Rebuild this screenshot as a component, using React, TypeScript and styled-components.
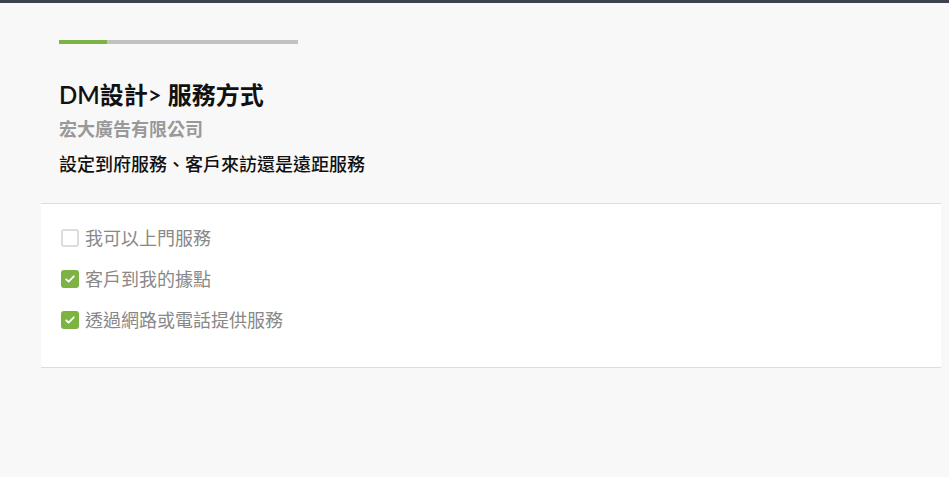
import React from 'react'
import styled, { createGlobalStyle } from 'styled-components'

const GlobalStyle = createGlobalStyle`
  html, body {
    margin: 0;
    padding: 0;
    background: #f8f8f8;
  }
  body {
    font-family: Lato, "Noto Sans CJK TC", sans-serif;
    color: #222;
  }
`

const Page = styled.div`
  min-height: 477px;
  border-top: 3px solid #3d434c;
  box-sizing: border-box;
  padding-top: 37px;
`

const Header = styled.div`
  padding: 0 59px;
`

const Progress = styled.div<{ $percent: number }>`
  width: 239px;
  height: 4px;
  background: #c2c2c2;

  &::before {
    content: '';
    display: block;
    height: 100%;
    width: ${({ $percent }) => $percent}%;
    background: #7cb342;
  }
`

const Title = styled.h1`
  margin: 36px 0 0;
  font-size: 24px;
  font-weight: 600;
  line-height: 30px;
  color: #111;
`

const Company = styled.div`
  margin-top: 7px;
  font-size: 18px;
  font-weight: 700;
  line-height: 24px;
  color: #999;
`

const Description = styled.p`
  margin: 11px 0 0;
  font-size: 18px;
  font-weight: 500;
  line-height: 24px;
  color: #111;
`

const Card = styled.div`
  margin: 27px 8px 0 41px;
  background: #fff;
  border-top: 1px solid #ddd;
  border-bottom: 1px solid #ddd;
  padding: 24px 20px 37px;
  display: flex;
  flex-direction: column;
  gap: 21px;
`

const Option = styled.label`
  display: flex;
  align-items: center;
  gap: 6px;
  font-size: 18px;
  line-height: 20px;
  color: #888;
  cursor: pointer;
`

const Box = styled.span<{ $checked: boolean }>`
  flex: none;
  width: 18px;
  height: 18px;
  box-sizing: border-box;
  border-radius: 3px;
  display: inline-flex;
  align-items: center;
  justify-content: center;
  background: ${({ $checked }) => ($checked ? '#7cb342' : '#fff')};
  border: ${({ $checked }) => ($checked ? 'none' : '2px solid #ddd')};
`

const options = [
  { label: '我可以上門服務', checked: false },
  { label: '客戶到我的據點', checked: true },
  { label: '透過網路或電話提供服務', checked: true },
]

const Check = () => (
  <svg width="12" height="12" viewBox="0 0 12 12" fill="none">
    <path d="M2.2 6.3l2.4 2.4 5.2-5.4" stroke="#fff" strokeWidth="1.8" strokeLinecap="round" strokeLinejoin="round" />
  </svg>
)

export default function App() {
  return (
    <Page>
      <GlobalStyle />
      <Header>
        <Progress $percent={20} />
        <Title>DM設計&gt; 服務方式</Title>
        <Company>宏大廣告有限公司</Company>
        <Description>設定到府服務、客戶來訪還是遠距服務</Description>
      </Header>
      <Card>
        {options.map((o) => (
          <Option key={o.label}>
            <Box $checked={o.checked}>{o.checked && <Check />}</Box>
            {o.label}
          </Option>
        ))}
      </Card>
    </Page>
  )
}
